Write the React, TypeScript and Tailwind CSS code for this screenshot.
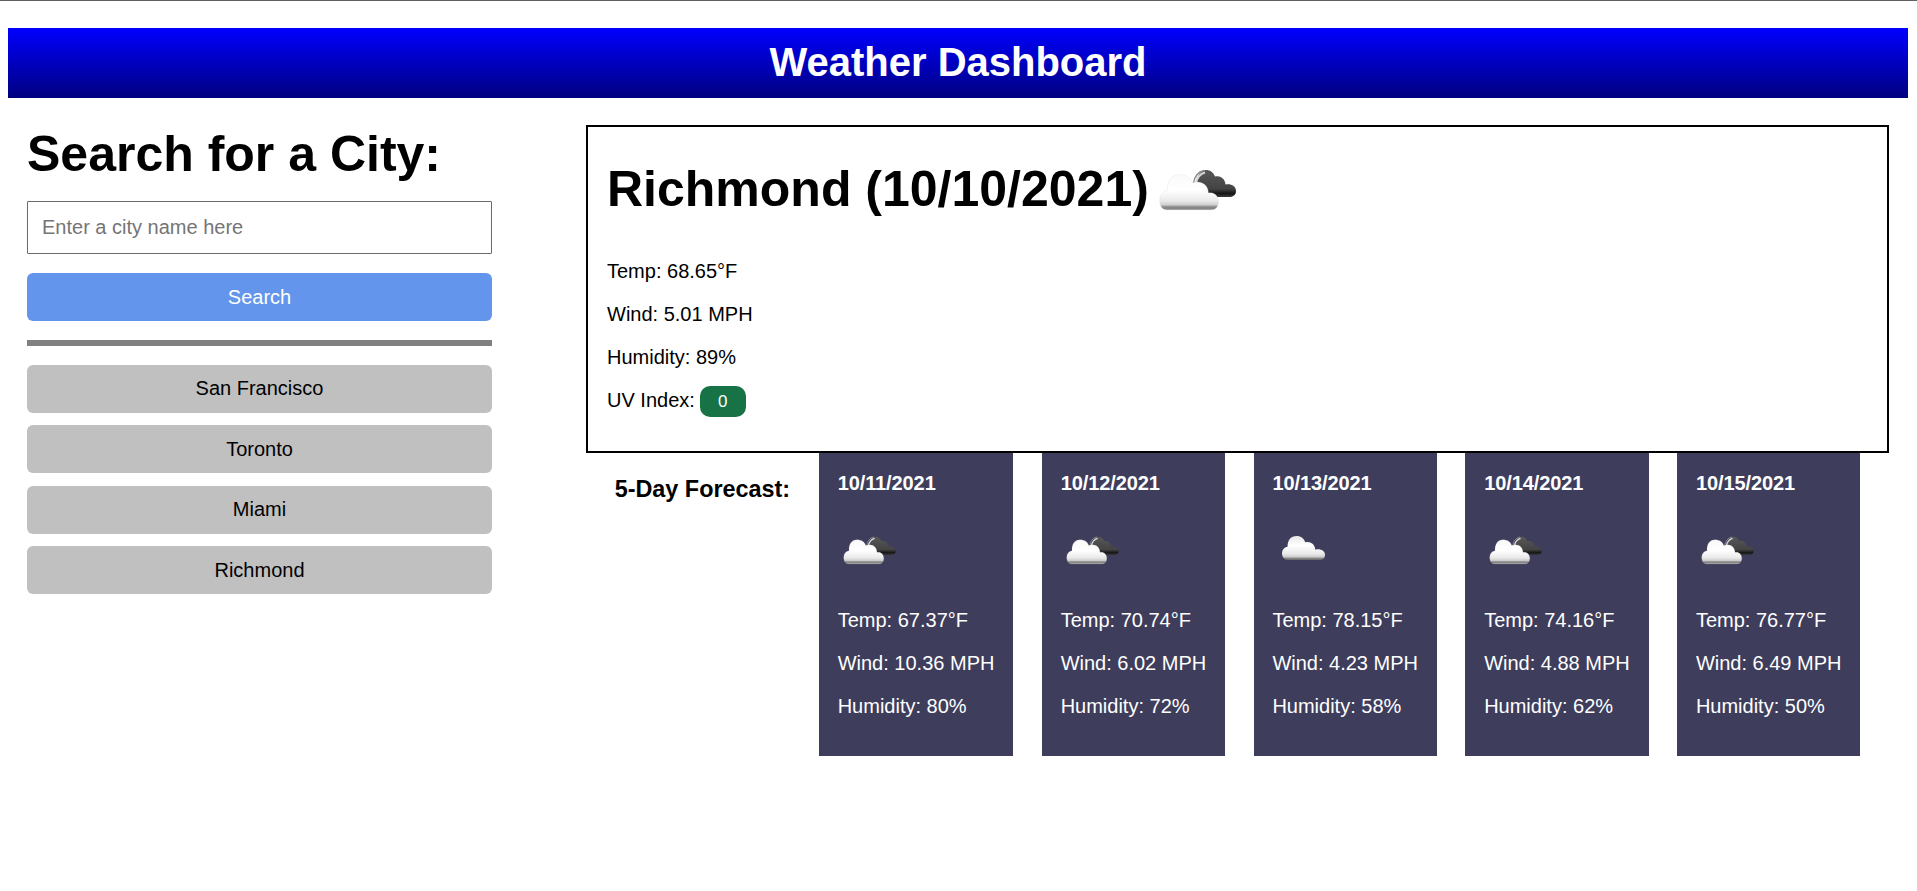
import React from "react";

function BrokenClouds({ className, id }: { className: string; id: string }) {
  return (
    <svg className={className} viewBox="0 0 80 44">
      <defs>
        <linearGradient id={`${id}-light`} x1="0" y1="0" x2="0" y2="1">
          <stop offset="0" stopColor="#fafafa" />
          <stop offset="0.45" stopColor="#ffffff" />
          <stop offset="0.75" stopColor="#e9e9e9" />
          <stop offset="0.86" stopColor="#cccccc" />
          <stop offset="0.91" stopColor="#8a8a8a" />
          <stop offset="0.96" stopColor="#858585" />
          <stop offset="1" stopColor="#b0b0b0" />
        </linearGradient>
        <linearGradient id={`${id}-dark`} x1="0" y1="0" x2="0" y2="1">
          <stop offset="0" stopColor="#585858" />
          <stop offset="0.7" stopColor="#434343" />
          <stop offset="0.87" stopColor="#161616" />
          <stop offset="1" stopColor="#3a3a3a" />
        </linearGradient>
      </defs>
      <path
        d="M38 14C38 6 42 1 47 1C51 1 54 3 56 7.5C62 6 66 10 66.5 15.5C72 14.5 77 17 77 22C77 26 74 28 70 28H46Z"
        fill={`url(#${id}-dark)`}
      />
      <path d="M34.500 14C35.500 8 38.5 3 45 1.5" fill="none" stroke="#8a8a8a" strokeWidth="1.4" />
      <path d="M37 14C38 9 41 5 46 3.5" fill="none" stroke="#d8d8d8" strokeWidth="2" />
      <path
        d="M8 41C3.5 41 0.7 37 0.7 31.5C0.7 26 3.5 22.5 8.5 21.5C8 12 12.5 5.5 20 5.5C26.500 5.5 31.500 8.500 33 14C41.500 11 49 15 49.500 24C55 22.500 59.500 27 59.500 32.500C59.500 38 56.500 41 52 41Z"
        fill={`url(#${id}-light)`}
        stroke="#cccccc"
        strokeOpacity="0.35"
        strokeWidth="0.6"
      />
    </svg>
  );
}

function Cloud({ className }: { className: string }) {
  return (
    <svg className={className} viewBox="0 0 62 36" preserveAspectRatio="none">
      <defs>
        <linearGradient id="cloud-fill" x1="0" y1="0" x2="0" y2="1">
          <stop offset="0" stopColor="#e6e6e6" />
          <stop offset="0.4" stopColor="#ffffff" />
          <stop offset="0.75" stopColor="#e9e9e9" />
          <stop offset="0.87" stopColor="#cccccc" />
          <stop offset="0.94" stopColor="#808080" />
          <stop offset="1" stopColor="#6a6a6a" />
        </linearGradient>
      </defs>
      <path
        d="M8 36C3 36 0 31.500 0 26C0 21 3 17 8 16C8 6 13 0 21 0C27.500 0 32 4 33.500 9.500C41 7.500 47.500 12.500 48 20.500C55 18.500 62 22 62 28C62 33 59 36 54 36Z"
        fill="url(#cloud-fill)"
      />
    </svg>
  );
}

const cities = ["San Francisco", "Toronto", "Miami", "Richmond"];

const forecast = [
  { date: "10/11/2021", icon: "broken", temp: "67.37", wind: "10.36", humidity: 80 },
  { date: "10/12/2021", icon: "broken", temp: "70.74", wind: "6.02", humidity: 72 },
  { date: "10/13/2021", icon: "cloud", temp: "78.15", wind: "4.23", humidity: 58 },
  { date: "10/14/2021", icon: "broken", temp: "74.16", wind: "4.88", humidity: 62 },
  { date: "10/15/2021", icon: "broken", temp: "76.77", wind: "6.49", humidity: 50 },
];

export default function App() {
  return (
    <div className="min-h-[891px] overflow-hidden border-t border-[#606060] bg-white pt-[27px] pr-[9px] pl-2 font-['Liberation_Sans',Arial,sans-serif] text-xl leading-[23px] text-black">
      <header className="flex h-[70px] items-center justify-center bg-[linear-gradient(#0000ff,#000080)] pb-0.5">
        <h1 className="text-[40px] leading-[46px] font-bold text-white">Weather Dashboard</h1>
      </header>
      <div className="flex items-start pl-[19px]">
        <aside className="flex w-[465px] shrink-0 flex-col pt-7">
          <h2 className="text-[50px] leading-[57px] font-bold">Search for a City:</h2>
          <input
            className="mt-[18px] h-[53px] rounded-[1px] border border-[#6b6b6b] px-3.5 placeholder:text-[#757575]"
            placeholder="Enter a city name here"
          />
          <button className="mt-[19px] h-12 rounded-md bg-[#6495ed] text-white">Search</button>
          <hr className="my-[19px] h-1.5 border-0 bg-[#808080]" />
          <div className="flex flex-col gap-[12.4px]">
            {cities.map((city) => (
              <button key={city} className="h-12 rounded-md bg-[#c0c0c0] first:pb-px">
                {city}
              </button>
            ))}
          </div>
        </aside>
        <main className="mt-[27px] ml-[94px] w-[1303px] shrink-0">
          <section className="h-[328px] border-2 border-black px-[19px] pt-[34px]">
            <div className="flex items-start">
              <h2 className="text-[50px] leading-[57px] font-bold">Richmond (10/10/2021)</h2>
              <BrokenClouds id="today" className="mt-[7.5px] ml-2.5 h-11 w-20 blur-[0.5px]" />
            </div>
            <div className="mt-[42px] flex flex-col gap-5">
              <p>Temp: 68.65°F</p>
              <p>Wind: 5.01 MPH</p>
              <p>Humidity: 89%</p>
              <p className="flex">
                UV Index:
                <span className="-mt-[3px] ml-[5px] flex h-[31px] w-[46px] items-center justify-center rounded-[10px] bg-[#177245] text-[17px] text-white">
                  0
                </span>
              </p>
            </div>
          </section>
          <section className="flex items-start pl-[28.67px]">
            <h3 className="mt-[23px] w-[204.33px] shrink-0 text-[23.4px] leading-[27px] font-bold">5-Day Forecast:</h3>
            <div className="flex gap-[28.67px]">
              {forecast.map((day) => (
                <article
                  key={day.date}
                  className="h-[303px] w-[183.1px] shrink-0 bg-[#3e3d5c] pt-[19px] pl-[18.7px] whitespace-nowrap text-white first:w-[194.3px]"
                >
                  <h4 className="font-bold tracking-[-0.1px]">{day.date}</h4>
                  <div className="mt-[41px] h-[73px]">
                    {day.icon === "broken" ? (
                      <BrokenClouds
                        id={`d${day.date.slice(3, 5)}`}
                        className="ml-[5px] h-[30px] w-[55px] blur-[0.4px]"
                      />
                    ) : (
                      <Cloud className="ml-2.5 h-6 w-[43px] blur-[0.4px]" />
                    )}
                  </div>
                  <div className="flex flex-col gap-5">
                    <p>Temp: {day.temp}°F</p>
                    <p>Wind: {day.wind} MPH</p>
                    <p>Humidity: {day.humidity}%</p>
                  </div>
                </article>
              ))}
            </div>
          </section>
        </main>
      </div>
    </div>
  );
}
